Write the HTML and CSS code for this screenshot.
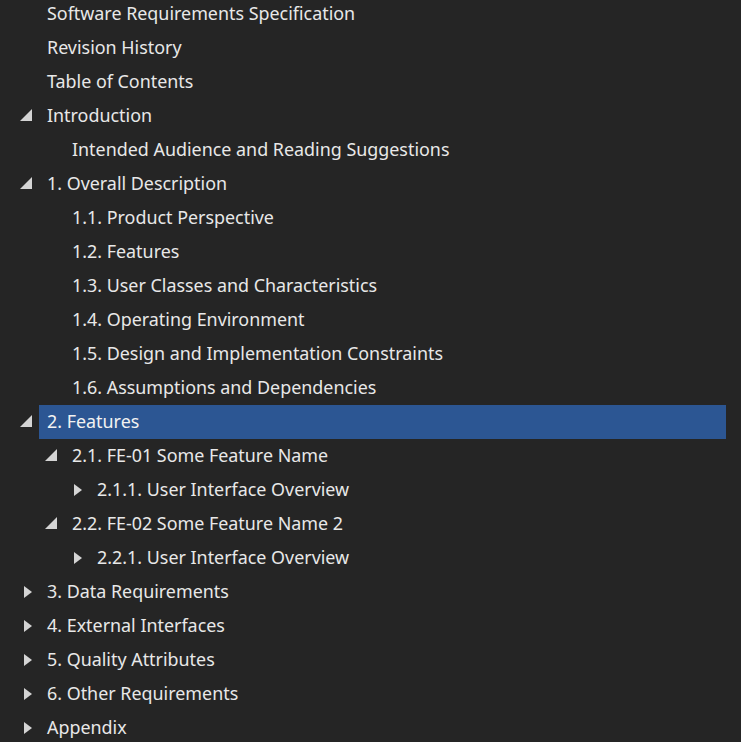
FILE: index.html
```html
<!DOCTYPE html>
<html>
<head>
<meta charset="utf-8">
<link rel="stylesheet" href="styles.css">
</head>
<body>
<ul class="tree">
  <li class="row lvl0"><span class="twisty"></span><span class="label">Software Requirements Specification</span></li>
  <li class="row lvl0"><span class="twisty"></span><span class="label">Revision History</span></li>
  <li class="row lvl0"><span class="twisty"></span><span class="label">Table of Contents</span></li>
  <li class="row lvl0"><span class="twisty open"></span><span class="label">Introduction</span></li>
  <li class="row lvl1"><span class="twisty"></span><span class="label">Intended Audience and Reading Suggestions</span></li>
  <li class="row lvl0"><span class="twisty open"></span><span class="label">1. Overall Description</span></li>
  <li class="row lvl1"><span class="twisty"></span><span class="label">1.1. Product Perspective</span></li>
  <li class="row lvl1"><span class="twisty"></span><span class="label">1.2. Features</span></li>
  <li class="row lvl1"><span class="twisty"></span><span class="label">1.3. User Classes and Characteristics</span></li>
  <li class="row lvl1"><span class="twisty"></span><span class="label">1.4. Operating Environment</span></li>
  <li class="row lvl1"><span class="twisty"></span><span class="label">1.5. Design and Implementation Constraints</span></li>
  <li class="row lvl1"><span class="twisty"></span><span class="label">1.6. Assumptions and Dependencies</span></li>
  <li class="row lvl0 selected"><span class="twisty open"></span><span class="label">2. Features</span></li>
  <li class="row lvl1"><span class="twisty open"></span><span class="label">2.1. FE-01 Some Feature Name</span></li>
  <li class="row lvl2"><span class="twisty closed"></span><span class="label">2.1.1. User Interface Overview</span></li>
  <li class="row lvl1"><span class="twisty open"></span><span class="label">2.2. FE-02 Some Feature Name 2</span></li>
  <li class="row lvl2"><span class="twisty closed"></span><span class="label">2.2.1. User Interface Overview</span></li>
  <li class="row lvl0"><span class="twisty closed"></span><span class="label">3. Data Requirements</span></li>
  <li class="row lvl0"><span class="twisty closed"></span><span class="label">4. External Interfaces</span></li>
  <li class="row lvl0"><span class="twisty closed"></span><span class="label">5. Quality Attributes</span></li>
  <li class="row lvl0"><span class="twisty closed"></span><span class="label">6. Other Requirements</span></li>
  <li class="row lvl0"><span class="twisty closed"></span><span class="label">Appendix</span></li>
</ul>
</body>
</html>
```
FILE: styles.css
```css
html, body {
  margin: 0;
  padding: 0;
  background: #252525;
  overflow: hidden;
}
.tree {
  list-style: none;
  margin: -3px 15px 0 0;
  padding: 0;
  font-family: "Noto Sans", "Open Sans", sans-serif;
  font-size: 17.9px;
  color: #e8e8e8;
}
.row {
  display: flex;
  align-items: stretch;
  height: 34px;
}
.lvl0 { padding-left: 20px; }
.lvl1 { padding-left: 45px; }
.lvl2 { padding-left: 70px; }
.twisty {
  flex: 0 0 19px;
  position: relative;
}
.twisty.open::before {
  content: "";
  position: absolute;
  left: 0;
  top: 10px;
  width: 0;
  height: 0;
  border-left: 12px solid transparent;
  border-bottom: 12px solid #d4d4d4;
}
.twisty.closed::before {
  content: "";
  position: absolute;
  left: 4px;
  top: 11px;
  width: 0;
  height: 0;
  border-top: 6px solid transparent;
  border-bottom: 6px solid transparent;
  border-left: 8px solid #d4d4d4;
}
.label {
  flex: 1;
  display: flex;
  align-items: center;
  padding-left: 8px;
  padding-bottom: 2px;
  white-space: nowrap;
}
.selected .label {
  background: #2c5693;
  color: #f2f2f2;
}
```
